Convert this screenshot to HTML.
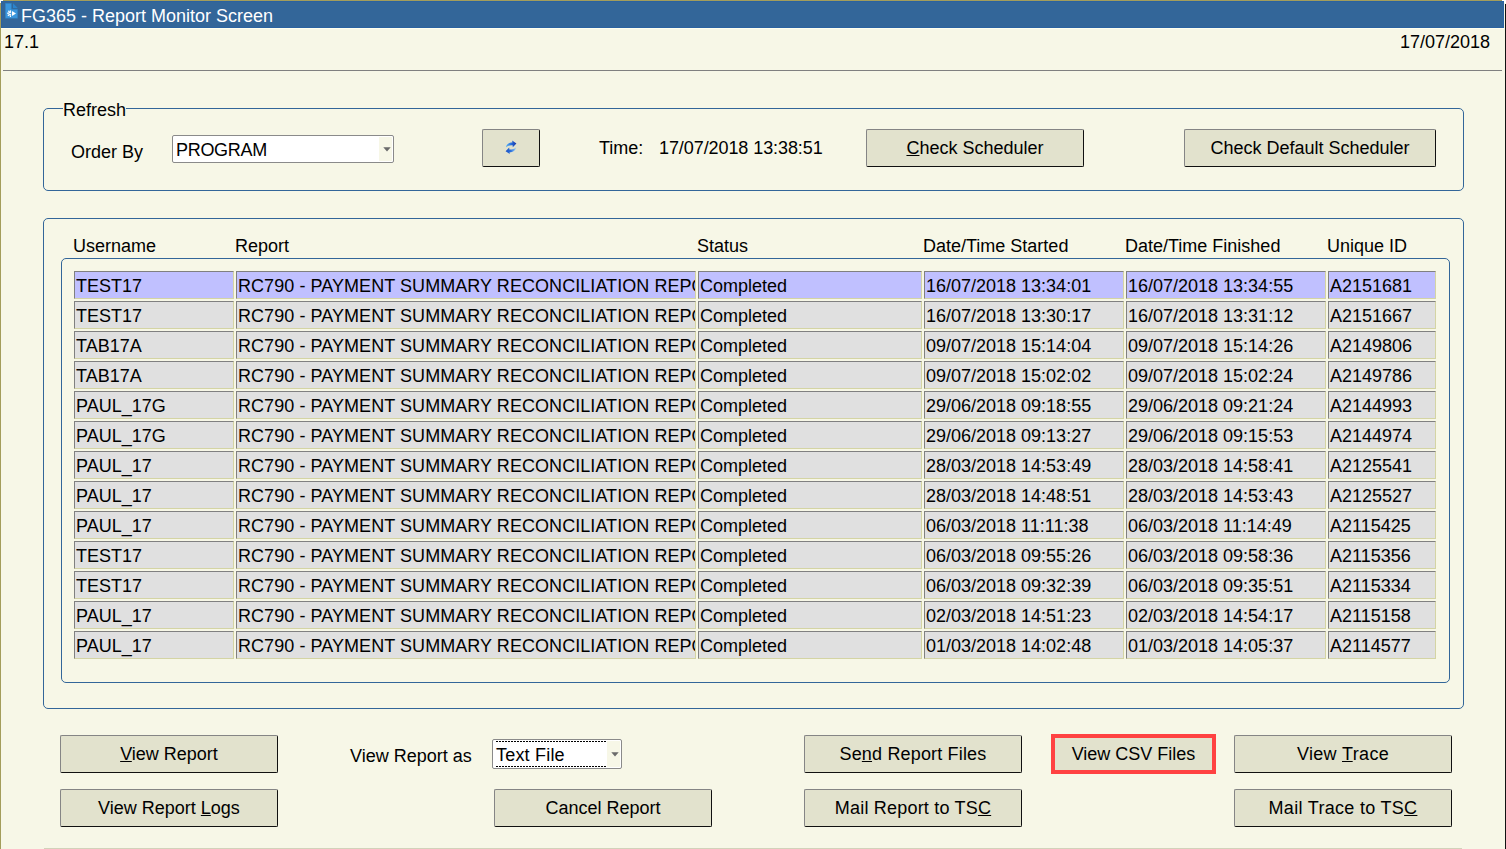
<!DOCTYPE html>
<html><head><meta charset="utf-8"><title>FG365 - Report Monitor Screen</title>
<style>
html,body{margin:0;padding:0;}
body{width:1506px;height:849px;overflow:hidden;background:#f7f7e7;font-family:"Liberation Sans",Arial,sans-serif;font-size:18px;line-height:20px;color:#000;position:relative;}
.a{position:absolute;white-space:nowrap;}
#tb{left:1px;top:1px;width:1503px;height:27px;background:#336699;box-sizing:border-box;border:1px solid #2b62a0;}
#tt{left:21px;top:6px;color:#fff;}
.fs{border:1px solid #336699;border-radius:5px;box-sizing:border-box;}
.lg{background:#f7f7e7;padding:0;}
.btn{box-sizing:border-box;background:#e2e2cd;border:1px solid #858585;border-right-color:#111;border-bottom-color:#111;border-radius:2px;text-align:center;height:38px;line-height:37px;}
.sel{box-sizing:border-box;background:#fff;border:1px solid #8a8a8a;border-radius:2px;}
.c{position:absolute;box-sizing:border-box;height:28px;background:#e0e0e0;border:1px solid;border-color:#808080 #d4d4a4 #d4d4a4 #808080;white-space:nowrap;overflow:hidden;line-height:26px;padding:1px 0 0 1px;}
.c.s{background:#c0c0ff;}
.c.r{letter-spacing:0.06px;}
u{text-decoration:underline;}
</style></head><body>
<div class="a" style="left:0;top:0;width:1506px;height:3px;background:#fff"></div>
<div class="a" style="left:3px;top:0;width:1499px;height:1px;background:#a39d5b"></div>
<div class="a" style="left:0;top:3px;width:1px;height:846px;background:#a39d5b"></div>
<div class="a" style="left:1505px;top:4px;width:1px;height:845px;background:#111"></div>
<div class="a" style="left:1px;top:28px;width:1504px;height:1px;background:#ffffee"></div>
<div class="a" id="tb"></div>
<svg class="a" style="left:5px;top:3px" width="13" height="16" viewBox="0 0 13 16"><defs><clipPath id="hg"><rect x="0" y="6" width="6.1" height="9.5"/></clipPath></defs><path d="M0.3 0.3H6.4V6.2H12.7V15.3H0.3Z" fill="#3b97dd" stroke="#2b7cc0" stroke-width="0.6"/><path d="M8 0.3L12.7 5H8Z" fill="#2b84cc"/><g clip-path="url(#hg)"><circle cx="5.6" cy="10.45" r="2.4" fill="#fff"/><circle cx="5.6" cy="10.45" r="3" fill="none" stroke="#fff" stroke-width="1.1" stroke-dasharray="1.25 1.106" stroke-dashoffset="0.6"/><circle cx="5.1" cy="10.45" r="0.8" fill="#3b97dd"/></g><path d="M7 8L11 10.5L7 13Z" fill="#fff"/></svg>
<div class="a" id="tt">FG365 - Report Monitor Screen</div>
<div class="a" style="left:4px;top:32px">17.1</div>
<div class="a" style="left:1400px;top:32px">17/07/2018</div>
<div class="a" style="left:3px;top:70px;width:1499px;height:1px;background:#808080"></div>

<!-- Refresh fieldset -->
<div class="a fs" style="left:43px;top:108px;width:1421px;height:83px"></div>
<div class="a lg" style="left:63px;top:100px;width:63px">Refresh</div>
<div class="a" style="left:71px;top:142px">Order By</div>
<div class="a sel" style="left:172px;top:135px;width:222px;height:28px"><span class="a" style="left:3px;top:4px;letter-spacing:-0.3px">PROGRAM</span>
<div class="a" style="right:1px;top:1px;width:13px;height:24px;background:#f7f7e7"></div><svg class="a" style="left:210px;top:11px" width="8" height="5" viewBox="0 0 8 5"><path d="M0.3 0.2H7.7L4 4.6Z" fill="#6a6a6a"/></svg></div>
<div class="a btn" style="left:482px;top:129px;width:58px"></div>
<svg class="a" style="left:505px;top:140px" width="12" height="15" viewBox="0 0 12 15"><defs><linearGradient id="g1" x1="0" y1="0" x2="1" y2="0"><stop offset="0" stop-color="#5ab4f4"/><stop offset="0.55" stop-color="#2468d8"/><stop offset="1" stop-color="#1834a4"/></linearGradient><linearGradient id="g2" x1="1" y1="0" x2="0" y2="0"><stop offset="0" stop-color="#9cd0f8"/><stop offset="0.5" stop-color="#2a70dc"/><stop offset="1" stop-color="#1c50c4"/></linearGradient></defs>
<path d="M1 7.2C1.2 4.4 4 2.4 7.4 2.4L7.2 0.6L11.4 3.4L7.8 7.2L7.6 5.2C5 5 3 5.6 1 7.2Z" fill="url(#g1)"/>
<path d="M11 7.4C10.8 10.2 8 12.2 4.6 12.2L4.8 14L0.6 11.2L4.2 7.4L4.4 9.4C7 9.6 9 9 11 7.4Z" fill="url(#g2)"/></svg>
<div class="a" style="left:599px;top:138px">Time:</div>
<div class="a" style="left:659px;top:138px;letter-spacing:-0.08px">17/07/2018 13:38:51</div>
<div class="a btn" style="left:866px;top:129px;width:218px"><u>C</u>heck Scheduler</div>
<div class="a btn" style="left:1184px;top:129px;width:252px">Check Default Scheduler</div>

<!-- Table fieldset -->
<div class="a fs" style="left:43px;top:218px;width:1421px;height:491px"></div>
<div class="a" style="left:73px;top:236px">Username</div>
<div class="a" style="left:235px;top:236px">Report</div>
<div class="a" style="left:697px;top:236px">Status</div>
<div class="a" style="left:923px;top:236px">Date/Time Started</div>
<div class="a" style="left:1125px;top:236px">Date/Time Finished</div>
<div class="a" style="left:1327px;top:236px">Unique ID</div>
<div class="a fs" style="left:61px;top:258px;width:1389px;height:425px"></div>
<div class="c s" style="left:74px;top:271px;width:160px">TEST17</div>
<div class="c s r" style="left:236px;top:271px;width:460px">RC790 - PAYMENT SUMMARY RECONCILIATION REPORT</div>
<div class="c s" style="left:698px;top:271px;width:224px">Completed</div>
<div class="c s" style="left:924px;top:271px;width:200px">16/07/2018 13:34:01</div>
<div class="c s" style="left:1126px;top:271px;width:200px">16/07/2018 13:34:55</div>
<div class="c s" style="left:1328px;top:271px;width:108px">A2151681</div>
<div class="c" style="left:74px;top:301px;width:160px">TEST17</div>
<div class="c r" style="left:236px;top:301px;width:460px">RC790 - PAYMENT SUMMARY RECONCILIATION REPORT</div>
<div class="c" style="left:698px;top:301px;width:224px">Completed</div>
<div class="c" style="left:924px;top:301px;width:200px">16/07/2018 13:30:17</div>
<div class="c" style="left:1126px;top:301px;width:200px">16/07/2018 13:31:12</div>
<div class="c" style="left:1328px;top:301px;width:108px">A2151667</div>
<div class="c" style="left:74px;top:331px;width:160px">TAB17A</div>
<div class="c r" style="left:236px;top:331px;width:460px">RC790 - PAYMENT SUMMARY RECONCILIATION REPORT</div>
<div class="c" style="left:698px;top:331px;width:224px">Completed</div>
<div class="c" style="left:924px;top:331px;width:200px">09/07/2018 15:14:04</div>
<div class="c" style="left:1126px;top:331px;width:200px">09/07/2018 15:14:26</div>
<div class="c" style="left:1328px;top:331px;width:108px">A2149806</div>
<div class="c" style="left:74px;top:361px;width:160px">TAB17A</div>
<div class="c r" style="left:236px;top:361px;width:460px">RC790 - PAYMENT SUMMARY RECONCILIATION REPORT</div>
<div class="c" style="left:698px;top:361px;width:224px">Completed</div>
<div class="c" style="left:924px;top:361px;width:200px">09/07/2018 15:02:02</div>
<div class="c" style="left:1126px;top:361px;width:200px">09/07/2018 15:02:24</div>
<div class="c" style="left:1328px;top:361px;width:108px">A2149786</div>
<div class="c" style="left:74px;top:391px;width:160px">PAUL_17G</div>
<div class="c r" style="left:236px;top:391px;width:460px">RC790 - PAYMENT SUMMARY RECONCILIATION REPORT</div>
<div class="c" style="left:698px;top:391px;width:224px">Completed</div>
<div class="c" style="left:924px;top:391px;width:200px">29/06/2018 09:18:55</div>
<div class="c" style="left:1126px;top:391px;width:200px">29/06/2018 09:21:24</div>
<div class="c" style="left:1328px;top:391px;width:108px">A2144993</div>
<div class="c" style="left:74px;top:421px;width:160px">PAUL_17G</div>
<div class="c r" style="left:236px;top:421px;width:460px">RC790 - PAYMENT SUMMARY RECONCILIATION REPORT</div>
<div class="c" style="left:698px;top:421px;width:224px">Completed</div>
<div class="c" style="left:924px;top:421px;width:200px">29/06/2018 09:13:27</div>
<div class="c" style="left:1126px;top:421px;width:200px">29/06/2018 09:15:53</div>
<div class="c" style="left:1328px;top:421px;width:108px">A2144974</div>
<div class="c" style="left:74px;top:451px;width:160px">PAUL_17</div>
<div class="c r" style="left:236px;top:451px;width:460px">RC790 - PAYMENT SUMMARY RECONCILIATION REPORT</div>
<div class="c" style="left:698px;top:451px;width:224px">Completed</div>
<div class="c" style="left:924px;top:451px;width:200px">28/03/2018 14:53:49</div>
<div class="c" style="left:1126px;top:451px;width:200px">28/03/2018 14:58:41</div>
<div class="c" style="left:1328px;top:451px;width:108px">A2125541</div>
<div class="c" style="left:74px;top:481px;width:160px">PAUL_17</div>
<div class="c r" style="left:236px;top:481px;width:460px">RC790 - PAYMENT SUMMARY RECONCILIATION REPORT</div>
<div class="c" style="left:698px;top:481px;width:224px">Completed</div>
<div class="c" style="left:924px;top:481px;width:200px">28/03/2018 14:48:51</div>
<div class="c" style="left:1126px;top:481px;width:200px">28/03/2018 14:53:43</div>
<div class="c" style="left:1328px;top:481px;width:108px">A2125527</div>
<div class="c" style="left:74px;top:511px;width:160px">PAUL_17</div>
<div class="c r" style="left:236px;top:511px;width:460px">RC790 - PAYMENT SUMMARY RECONCILIATION REPORT</div>
<div class="c" style="left:698px;top:511px;width:224px">Completed</div>
<div class="c" style="left:924px;top:511px;width:200px">06/03/2018 11:11:38</div>
<div class="c" style="left:1126px;top:511px;width:200px">06/03/2018 11:14:49</div>
<div class="c" style="left:1328px;top:511px;width:108px">A2115425</div>
<div class="c" style="left:74px;top:541px;width:160px">TEST17</div>
<div class="c r" style="left:236px;top:541px;width:460px">RC790 - PAYMENT SUMMARY RECONCILIATION REPORT</div>
<div class="c" style="left:698px;top:541px;width:224px">Completed</div>
<div class="c" style="left:924px;top:541px;width:200px">06/03/2018 09:55:26</div>
<div class="c" style="left:1126px;top:541px;width:200px">06/03/2018 09:58:36</div>
<div class="c" style="left:1328px;top:541px;width:108px">A2115356</div>
<div class="c" style="left:74px;top:571px;width:160px">TEST17</div>
<div class="c r" style="left:236px;top:571px;width:460px">RC790 - PAYMENT SUMMARY RECONCILIATION REPORT</div>
<div class="c" style="left:698px;top:571px;width:224px">Completed</div>
<div class="c" style="left:924px;top:571px;width:200px">06/03/2018 09:32:39</div>
<div class="c" style="left:1126px;top:571px;width:200px">06/03/2018 09:35:51</div>
<div class="c" style="left:1328px;top:571px;width:108px">A2115334</div>
<div class="c" style="left:74px;top:601px;width:160px">PAUL_17</div>
<div class="c r" style="left:236px;top:601px;width:460px">RC790 - PAYMENT SUMMARY RECONCILIATION REPORT</div>
<div class="c" style="left:698px;top:601px;width:224px">Completed</div>
<div class="c" style="left:924px;top:601px;width:200px">02/03/2018 14:51:23</div>
<div class="c" style="left:1126px;top:601px;width:200px">02/03/2018 14:54:17</div>
<div class="c" style="left:1328px;top:601px;width:108px">A2115158</div>
<div class="c" style="left:74px;top:631px;width:160px">PAUL_17</div>
<div class="c r" style="left:236px;top:631px;width:460px">RC790 - PAYMENT SUMMARY RECONCILIATION REPORT</div>
<div class="c" style="left:698px;top:631px;width:224px">Completed</div>
<div class="c" style="left:924px;top:631px;width:200px">01/03/2018 14:02:48</div>
<div class="c" style="left:1126px;top:631px;width:200px">01/03/2018 14:05:37</div>
<div class="c" style="left:1328px;top:631px;width:108px">A2114577</div>

<!-- Bottom buttons -->
<div class="a btn" style="left:60px;top:735px;width:218px"><u>V</u>iew Report</div>
<div class="a btn" style="left:60px;top:789px;width:218px">View Report <u>L</u>ogs</div>
<div class="a" style="left:350px;top:746px">View Report as</div>
<div class="a sel" style="left:492px;top:739px;width:130px;height:30px"><span class="a" style="left:3px;top:5px;letter-spacing:0.2px">Text File</span>
<div class="a" style="left:3px;top:1px;width:110px;height:1px;background:repeating-linear-gradient(90deg,#000 0,#000 2px,transparent 2px,transparent 3px)"></div><div class="a" style="left:3px;top:26px;width:110px;height:1px;background:repeating-linear-gradient(90deg,#000 0,#000 2px,transparent 2px,transparent 3px)"></div>
<div class="a" style="right:1px;top:1px;width:13px;height:26px;background:#f7f7e7"></div><svg class="a" style="left:118px;top:12px" width="8" height="5" viewBox="0 0 8 5"><path d="M0.3 0.2H7.7L4 4.6Z" fill="#6a6a6a"/></svg></div>
<div class="a btn" style="left:494px;top:789px;width:218px">Cancel Report</div>
<div class="a btn" style="left:804px;top:735px;width:218px;letter-spacing:0.17px">Se<u>n</u>d Report Files</div>
<div class="a btn" style="left:804px;top:789px;width:218px;letter-spacing:0.2px">Mail Report to TS<u>C</u></div>
<div class="a" style="left:1051px;top:734px;width:165px;height:40px;border:4px solid #ff4242;box-sizing:border-box;background:#e2e2cd;text-align:center;line-height:32px">View CSV Files</div>
<div class="a btn" style="left:1234px;top:735px;width:218px;letter-spacing:0.35px">View <u>T</u>race</div>
<div class="a btn" style="left:1234px;top:789px;width:218px;letter-spacing:0.3px">Mail Trace to TS<u>C</u></div>
<div class="a" style="left:44px;top:848px;width:1418px;height:1px;background:#d2d2ba"></div>
</body></html>
